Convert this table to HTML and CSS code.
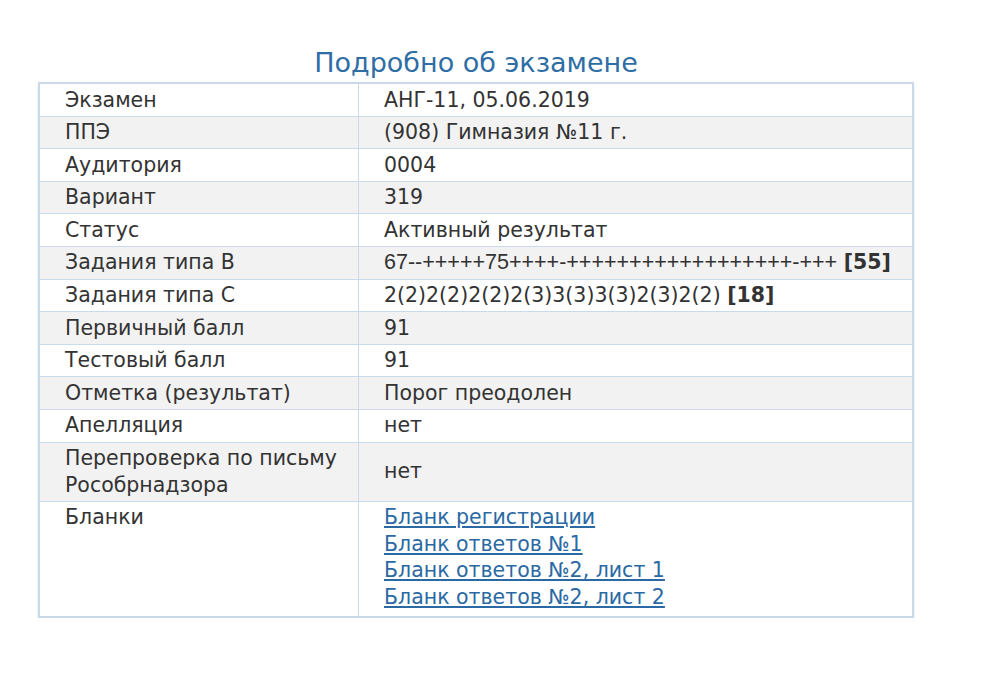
FILE: index.html
```html
<!DOCTYPE html>
<html lang="ru">
<head>
<meta charset="utf-8">
<link rel="stylesheet" href="styles.css">
</head>
<body>
<div class="page">
  <h1 class="title">Подробно об экзамене</h1>
  <table class="details">
    <tr><td class="k">Экзамен</td><td class="v">АНГ-11, 05.06.2019</td></tr>
    <tr><td class="k">ППЭ</td><td class="v">(908) Гимназия №11 г.</td></tr>
    <tr><td class="k">Аудитория</td><td class="v">0004</td></tr>
    <tr><td class="k">Вариант</td><td class="v">319</td></tr>
    <tr><td class="k">Статус</td><td class="v">Активный результат</td></tr>
    <tr><td class="k">Задания типа B</td><td class="v"><span class="code">67--+++++75++++-++++++++++++++++++-+++</span> <b>[55]</b></td></tr>
    <tr><td class="k">Задания типа C</td><td class="v">2(2)2(2)2(2)2(3)3(3)3(3)2(3)2(2) <b>[18]</b></td></tr>
    <tr><td class="k">Первичный балл</td><td class="v">91</td></tr>
    <tr><td class="k">Тестовый балл</td><td class="v">91</td></tr>
    <tr><td class="k">Отметка (результат)</td><td class="v">Порог преодолен</td></tr>
    <tr><td class="k">Апелляция</td><td class="v">нет</td></tr>
    <tr><td class="k">Перепроверка по письму<br>Рособрнадзора</td><td class="v">нет</td></tr>
    <tr><td class="k top">Бланки</td><td class="v blanks"><a href="#">Бланк регистрации</a><br><a href="#">Бланк ответов №1</a><br><a href="#">Бланк ответов №2, лист 1</a><br><a href="#">Бланк ответов №2, лист 2</a></td></tr>
  </table>
</div>
</body>
</html>
```
FILE: styles.css
```css
html, body {
  margin: 0;
  padding: 0;
  background: #ffffff;
}
body {
  font-family: "DejaVu Sans", Verdana, sans-serif;
  color: #333333;
}
.page {
  width: 876px;
  margin-left: 38px;
  padding-top: 44px;
}
.title {
  margin: 0;
  font-weight: normal;
  font-size: 27px;
  line-height: 38px;
  text-align: center;
  color: #2f6ea5;
  height: 38px;
}
.details {
  width: 876px;
  border-collapse: collapse;
  border: 2px solid #c9d9e8;
  box-shadow: 0 1px 2px rgba(150, 170, 190, 0.35);
  font-size: 20.5px;
  line-height: 26.6px;
}
.details td {
  border: 1px solid #c9dbea;
  padding: 2.5px 8px 2.5px 25px;
  vertical-align: middle;
  white-space: nowrap;
}
.details td.k {
  width: 285px;
}
.details td.top {
  vertical-align: top;
}
.details td.blanks {
  padding-bottom: 5px;
}
.details tr:nth-child(even) td {
  background: #f2f2f2;
}
.details .code {
  font-family: "Liberation Sans", Arial, sans-serif;
  font-size: 21.5px;
  letter-spacing: 0;
}
.details b {
  font-weight: bold;
}
.details a {
  color: #2a69a3;
  text-decoration: underline;
}
```
